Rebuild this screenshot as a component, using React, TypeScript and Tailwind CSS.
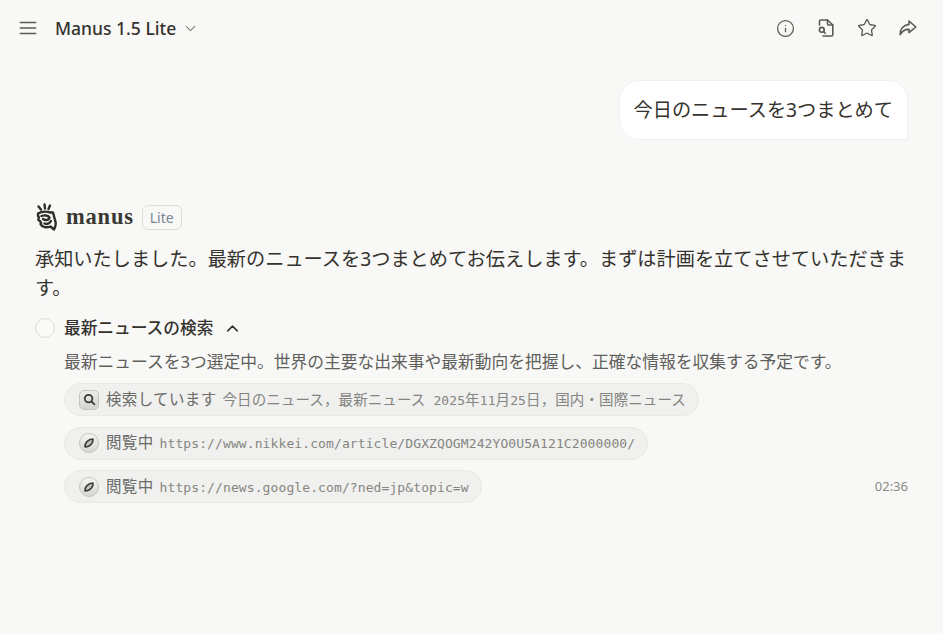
import { Info, Star, ChevronDown, ChevronUp } from "lucide-react";
import type { ReactNode } from "react";

const cjk = "font-['Noto_Sans','Noto_Sans_CJK_JP',sans-serif]";

function MenuIcon() {
  return (
    <svg width="20" height="20" viewBox="0 0 20 20" fill="none" stroke="#5a5a57" strokeWidth="1.7" strokeLinecap="round">
      <path d="M2.5 4.5H17.5" />
      <path d="M2.5 10H17.5" />
      <path d="M2.5 15.5H17.5" />
    </svg>
  );
}

function FileSearch() {
  return (
    <svg width="20" height="20" viewBox="0 0 20 20" fill="none" stroke="#5a5a57" strokeWidth="1.6" strokeLinecap="round" strokeLinejoin="round">
      <path d="M3.5 7V3.2C3.5 2.5 4 2 4.7 2H11.5L16.8 7V16.8C16.8 17.5 16.3 18 15.6 18H7" />
      <path d="M11.5 2V6C11.5 6.6 11.9 7 12.5 7H16.8" />
      <circle cx="5.8" cy="11.8" r="2.4" />
      <path d="M7.6 13.6L9.2 15.2" />
    </svg>
  );
}

function Share() {
  return (
    <svg width="20" height="20" viewBox="0 0 20 20" fill="none" stroke="#5a5a57" strokeWidth="1.6" strokeLinejoin="round" strokeLinecap="round">
      <path d="M11 3L17.8 9L11 14.6V11.4C7.4 11.2 4.4 12.6 2.2 16.6C2 11.4 5 7.2 11 6.4V3Z" />
    </svg>
  );
}

function Logo() {
  return (
    <svg width="24" height="28" viewBox="0 0 24 28" fill="none" stroke="#2f2d28" strokeWidth="2.4" strokeLinecap="round" strokeLinejoin="round">
      <path d="M3.5 3.5L6 6.5" />
      <path d="M9.5 1.5L10 5.5" />
      <path d="M15 2.5L13.5 6" />
      <path d="M3 10.5C7 8 12 8.5 15.5 9.5L18 9.5L20 17C21 20 21 22 20 24L19 26.5L15.5 23.5C12 25 7 24.5 5.5 21C7 20 5 18 3.5 17C3 15 5 14.5 3 13Z" />
      <path d="M6.5 13C9 12 13 12 14.5 14.5C14 17.5 10 17.5 8 16" />
      <path d="M9.5 20.5C12 21.5 14.5 20.5 16 18" />
    </svg>
  );
}

function Compass() {
  return (
    <span className="flex h-[20px] w-[20px] shrink-0 items-center justify-center rounded-full border border-[#c4c4c1] bg-gradient-to-b from-[#f6f6f5] to-[#d6d6d4]">
      <svg width="12" height="12" viewBox="0 0 12 12" fill="#c4c4c1" stroke="#3c3c39" strokeWidth="1.6" strokeLinejoin="round">
        <path d="M10 2C10.5 5.5 7.5 10 2 10C1.5 6 5 2.2 10 2Z" />
      </svg>
    </span>
  );
}

function SearchBox() {
  return (
    <span className="flex h-[20px] w-[20px] shrink-0 items-center justify-center rounded-[5px] border border-[#c4c4c1] bg-gradient-to-b from-[#ececea] to-[#d4d4d2]">
      <svg width="13" height="13" viewBox="0 0 13 13" fill="none" stroke="#3c3c39" strokeWidth="1.8" strokeLinecap="round">
        <circle cx="5.6" cy="5.6" r="3.8" />
        <path d="M8.6 8.6L11.4 11.4" />
      </svg>
    </span>
  );
}

function Pill({ icon, label, children }: { icon: ReactNode; label: string; children: ReactNode }) {
  return (
    <div className="flex h-[33px] w-fit items-center gap-[7px] rounded-full border border-[#e8e8e6] bg-[#f0f0ef] pl-[14px] pr-[12px]">
      {icon}
      <span className="flex items-baseline gap-[6px] whitespace-nowrap">
        <span className="text-[15.5px] tracking-[0.35px] text-[#6b6b68]">{label}</span>
        <span className="font-['DejaVu_Sans_Mono','Noto_Sans_CJK_JP',monospace] text-[13px] tracking-[0.1px] text-[#85857f]">{children}</span>
      </span>
    </div>
  );
}

function Wide({ children }: { children: ReactNode }) {
  return <span className="text-[14.5px]">{children}</span>;
}

export default function App() {
  return (
    <div className={`flex h-[634px] w-[943px] flex-col overflow-hidden bg-[#f8f8f7] ${cjk} text-[#34322d]`}>
      <header className="flex h-[56px] shrink-0 items-center justify-between pl-[18px] pr-[25px]">
        <div className="flex items-center">
          <MenuIcon />
          <span className="ml-[17px] text-[17.5px] font-medium text-[#34322d]">Manus 1.5 Lite</span>
          <ChevronDown size={17} strokeWidth={1.6} color="#7d7d79" className="ml-[6px]" />
        </div>
        <div className="flex items-center gap-[21px]">
          <Info size={19} strokeWidth={1.6} color="#5a5a57" />
          <FileSearch />
          <Star size={20} strokeWidth={1.6} color="#5a5a57" />
          <Share />
        </div>
      </header>

      <main className="flex flex-1 flex-col pl-[35px] pr-[35px]">
        <div className="mt-[24px] flex justify-end">
          <div className="flex h-[60px] items-center rounded-[20px] rounded-br-none border border-[#f0f0ee] bg-white pl-[14px] pr-[14px] pt-[1px] text-[19.2px] text-[#34322d]">
            今日のニュースを3つまとめて
          </div>
        </div>

        <div className="mt-[62px] flex h-[30px] items-center">
          <Logo />
          <span className="ml-[7px] font-['Liberation_Serif',serif] text-[22.5px] font-bold tracking-[0.8px] text-[#3a3833]">manus</span>
          <span className="ml-[8px] rounded-[6px] border border-[#dcdcd9] px-[7px] py-[1px] text-[14px] text-[#7a8594]">Lite</span>
        </div>

        <p className="mt-[12px] text-[19.2px] leading-[29px] text-[#34322d]">
          承知いたしました。最新のニュースを3つまとめてお伝えします。まずは計画を立てさせていただきます。
        </p>

        <div className="mt-[13px] flex h-[26px] items-center">
          <span className="h-[20px] w-[20px] rounded-full border border-[#dcdcd9] bg-[#fafaf9]" />
          <span className="ml-[9px] text-[16.7px] font-medium text-[#34322d]">最新ニュースの検索</span>
          <ChevronUp size={19} strokeWidth={2} color="#34322d" className="ml-[10px]" />
        </div>

        <div className="ml-[29px] flex flex-col">
          <p className="mt-[9px] whitespace-nowrap text-[16.75px] leading-[24px] text-[#5f5f5b]">
            最新ニュースを3つ選定中。世界の主要な出来事や最新動向を把握し、正確な情報を収集する予定です。
          </p>
          <div className="mt-[9px] flex flex-col gap-[10.5px]">
            <Pill icon={<SearchBox />} label="検索しています">
              <Wide>今日のニュース，最新ニュース</Wide> 2025<Wide>年</Wide>11<Wide>月</Wide>25<Wide>日，国内・国際ニュース</Wide>
            </Pill>
            <Pill icon={<Compass />} label="閲覧中">https://www.nikkei.com/article/DGXZQOGM242YO0U5A121C2000000/</Pill>
            <div className="flex items-center justify-between">
              <Pill icon={<Compass />} label="閲覧中">https://news.google.com/?ned=jp&amp;topic=w</Pill>
              <span className="text-[13px] text-[#8a8a85]">02:36</span>
            </div>
          </div>
        </div>
      </main>
    </div>
  );
}
